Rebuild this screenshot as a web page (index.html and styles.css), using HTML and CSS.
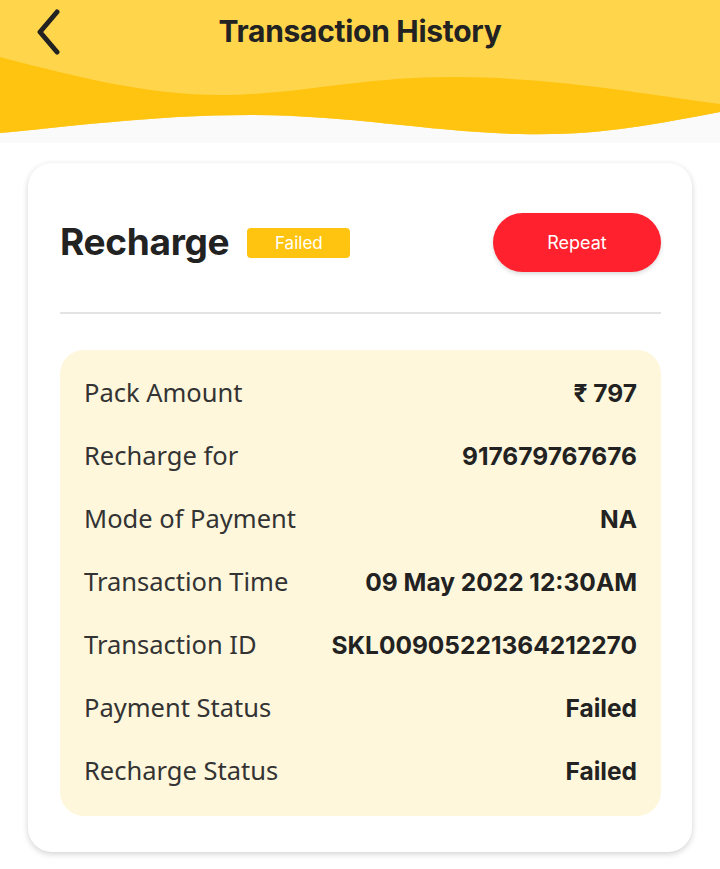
FILE: index.html
```html
<!DOCTYPE html>
<html lang="en">
<head>
  <meta charset="UTF-8" />
  <meta name="viewport" content="width=device-width, initial-scale=1.0"/>
  <title>Transaction History</title>
  <link rel="stylesheet" href="styles.css">
</head>
<body>
  <!-- Header with wave -->
  <header class="header">
    <svg class="wave" viewBox="0 0 720 143" preserveAspectRatio="none">
      <rect width="720" height="143" fill="#fafafa"/>
      <path d="M0,0 H720 V112 C650,125 600,136 520,134 C430,132 350,115 250,115 C150,115 60,128 0,133 Z" fill="#ffd54c"/>
      <path d="M0,57 C80,78 150,95 220,95 C300,95 360,76 460,77 C560,78 650,95 720,104 V112 C650,125 600,136 520,134 C430,132 350,115 250,115 C150,115 60,128 0,133 Z" fill="#ffc410"/>
    </svg>
    <div class="topbar">
      <button class="back" type="button" aria-label="Back">
        <svg width="30" height="48" viewBox="0 0 30 48">
          <path d="M24 5 L7 25 L24 45" fill="none" stroke="#222" stroke-width="5" stroke-linecap="round" stroke-linejoin="round"/>
        </svg>
      </button>
      <h1>Transaction History</h1>
    </div>
  </header>

  <div class="card">
    <div class="card-head">
      <h2>Recharge</h2>
      <span class="badge">Failed</span>
      <button class="repeat-btn" type="button">Repeat</button>
    </div>

    <div class="details">
      <div class="row"><span class="label">Pack Amount</span><span class="value">₹ 797</span></div>
      <div class="row"><span class="label">Recharge for</span><span class="value">917679767676</span></div>
      <div class="row"><span class="label">Mode of Payment</span><span class="value">NA</span></div>
      <div class="row"><span class="label">Transaction Time</span><span class="value">09 May 2022 12:30AM</span></div>
      <div class="row"><span class="label">Transaction ID</span><span class="value">SKL00905221364212270</span></div>
      <div class="row"><span class="label">Payment Status</span><span class="value">Failed</span></div>
      <div class="row"><span class="label">Recharge Status</span><span class="value">Failed</span></div>
    </div>
  </div>
</body>
</html>
```
FILE: styles.css
```css
body {
  font-family: "Noto Sans", sans-serif;
  margin: 0;
  background-color: #ffffff;
  width: 720px;
}

.header {
  position: relative;
  height: 143px;
}

.wave {
  position: absolute;
  top: 0;
  left: 0;
  width: 720px;
  height: 143px;
  display: block;
}

.topbar {
  position: relative;
  height: 62px;
  display: flex;
  align-items: center;
  justify-content: center;
}

.back {
  position: absolute;
  left: 33px;
  top: 7px;
  padding: 0;
  border: none;
  background: none;
  cursor: pointer;
}

.back svg {
  display: block;
}

.topbar h1 {
  margin: 0;
  font-family: Inter, sans-serif;
  font-weight: 700;
  font-size: 30px;
  letter-spacing: -0.3px;
  color: #222;
}

.card {
  margin: 20px 28px 18px;
  background: #ffffff;
  border-radius: 24px;
  box-shadow: 0 2px 6px rgba(0, 0, 0, 0.18);
  padding: 48px 31px 36px 32px;
}

.card-head {
  display: flex;
  align-items: center;
  padding-bottom: 39px;
  border-bottom: 2px solid #e3e3e3;
  margin-bottom: 36px;
}

.card-head h2 {
  margin: 0;
  font-family: Inter, sans-serif;
  font-weight: 700;
  font-size: 37px;
  letter-spacing: -0.3px;
  color: #222;
  line-height: 62px;
}

.badge {
  margin-left: 18px;
  width: 103px;
  height: 30px;
  line-height: 30px;
  text-align: center;
  background: #ffc410;
  color: #fff;
  font-family: Inter, sans-serif;
  font-size: 17px;
  border-radius: 4px;
  margin-top: 2px;
}

.repeat-btn {
  margin-left: auto;
  width: 168px;
  height: 59px;
  border: none;
  border-radius: 30px;
  background: #ff222e;
  color: #fff;
  font-family: Inter, sans-serif;
  font-size: 18px;
  box-shadow: 0 2px 4px rgba(0, 0, 0, 0.15);
  cursor: pointer;
}

.details {
  background: #fef7dc;
  border-radius: 24px;
  padding: 10px 24px 15px;
}

.row {
  display: flex;
  justify-content: space-between;
  align-items: center;
  height: 63px;
}

.label {
  font-size: 25.5px;
  color: #333;
}

.value {
  font-family: Inter, sans-serif;
  font-weight: 700;
  font-size: 24.5px;
  padding-top: 3px;
  color: #222;
}
```
